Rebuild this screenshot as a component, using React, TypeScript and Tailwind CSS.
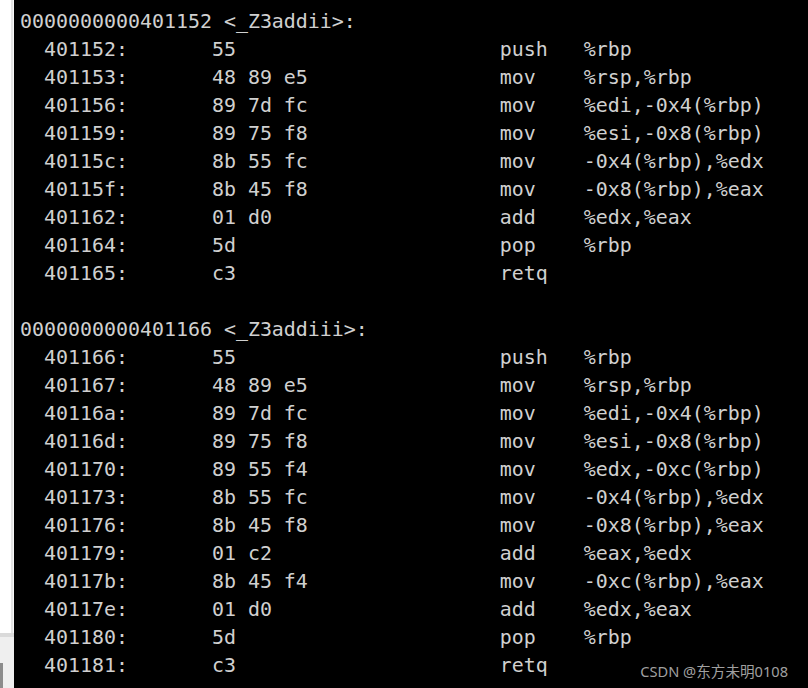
import React from 'react';

type Row = { addr: string; bytes: string; op: string; args: string } | { label: string } | null;

const rows: Row[] = [
  { label: '0000000000401152 <_Z3addii>:' },
  { addr: '401152', bytes: '55', op: 'push', args: '%rbp' },
  { addr: '401153', bytes: '48 89 e5', op: 'mov', args: '%rsp,%rbp' },
  { addr: '401156', bytes: '89 7d fc', op: 'mov', args: '%edi,-0x4(%rbp)' },
  { addr: '401159', bytes: '89 75 f8', op: 'mov', args: '%esi,-0x8(%rbp)' },
  { addr: '40115c', bytes: '8b 55 fc', op: 'mov', args: '-0x4(%rbp),%edx' },
  { addr: '40115f', bytes: '8b 45 f8', op: 'mov', args: '-0x8(%rbp),%eax' },
  { addr: '401162', bytes: '01 d0', op: 'add', args: '%edx,%eax' },
  { addr: '401164', bytes: '5d', op: 'pop', args: '%rbp' },
  { addr: '401165', bytes: 'c3', op: 'retq', args: '' },
  null,
  { label: '0000000000401166 <_Z3addiii>:' },
  { addr: '401166', bytes: '55', op: 'push', args: '%rbp' },
  { addr: '401167', bytes: '48 89 e5', op: 'mov', args: '%rsp,%rbp' },
  { addr: '40116a', bytes: '89 7d fc', op: 'mov', args: '%edi,-0x4(%rbp)' },
  { addr: '40116d', bytes: '89 75 f8', op: 'mov', args: '%esi,-0x8(%rbp)' },
  { addr: '401170', bytes: '89 55 f4', op: 'mov', args: '%edx,-0xc(%rbp)' },
  { addr: '401173', bytes: '8b 55 fc', op: 'mov', args: '-0x4(%rbp),%edx' },
  { addr: '401176', bytes: '8b 45 f8', op: 'mov', args: '-0x8(%rbp),%eax' },
  { addr: '401179', bytes: '01 c2', op: 'add', args: '%eax,%edx' },
  { addr: '40117b', bytes: '8b 45 f4', op: 'mov', args: '-0xc(%rbp),%eax' },
  { addr: '40117e', bytes: '01 d0', op: 'add', args: '%edx,%eax' },
  { addr: '401180', bytes: '5d', op: 'pop', args: '%rbp' },
  { addr: '401181', bytes: 'c3', op: 'retq', args: '' },
];

// objdump columns: addr at col 2, bytes at col 16, mnemonic at col 40, operands at col 47
const lineText = (r: Row) => {
  if (!r) return ' ';
  if ('label' in r) return r.label;
  return ('  ' + r.addr + ':').padEnd(16) + r.bytes.padEnd(24) + r.op.padEnd(7) + r.args;
};

const App = () => {
  return (
    <div className="flex w-[808px] h-[688px] overflow-hidden bg-black">
      {/* window edge on the left */}
      <div className="flex flex-col w-[14px] shrink-0">
        <div className="flex flex-1 bg-white">
          <div className="w-[11px]" />
          <div className="w-[2px] bg-[#e3e3e3]" />
          <div className="w-[1px] bg-[#f7f7f7]" />
        </div>
        <div className="h-[4px] bg-[#dadada]" />
        <div className="flex flex-col h-[51px] bg-[#efefef]">
          <div className="h-[26px]" />
          <div className="flex-1 w-[3px] bg-[#8c8c8c]" />
        </div>
      </div>

      <div className="relative flex-1 pl-[6px] pt-[8px]">
        <pre className="m-0 whitespace-pre text-[#d0d0d0] text-[19.93px] leading-[28px] font-['DejaVu_Sans_Mono',monospace]">
          {rows.map((r, i) => (
            <div key={i}>{lineText(r)}</div>
          ))}
        </pre>
        <div className="absolute right-[20px] bottom-[8px] text-[14.6px] leading-[18px] text-[#a0a0a0] font-['Noto_Sans','Noto_Sans_CJK_SC',sans-serif]">
          CSDN @东方未明0108
        </div>
      </div>
    </div>
  );
};

export default App;
